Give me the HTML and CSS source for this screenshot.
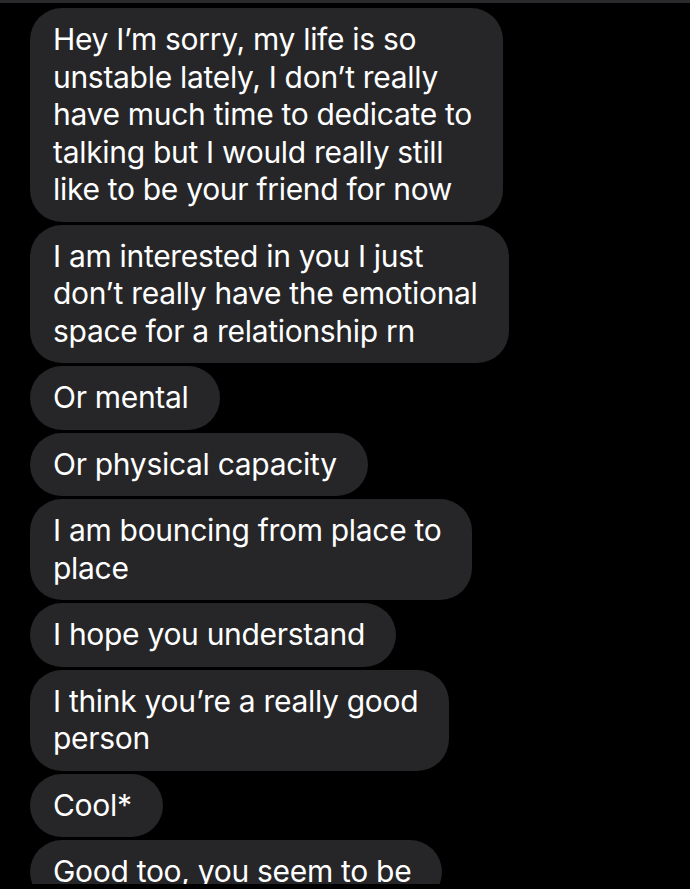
FILE: index.html
```html
<!DOCTYPE html>
<html lang="en">
<head>
    <meta charset="UTF-8">
    <meta name="viewport" content="width=device-width, initial-scale=1.0">
    <title>Messages</title>
    <link rel="stylesheet" href="styles.css">
</head>
<body>
    <div class="topbar"></div>
    <div class="thread">
        <div class="bubble">Hey I’m sorry, my life is so<br>unstable lately, I don’t really<br>have much time to dedicate to<br>talking but I would really still<br>like to be your friend for now</div>
        <div class="bubble">I am interested in you I just<br>don’t really have the emotional<br>space for a relationship rn</div>
        <div class="bubble">Or mental</div>
        <div class="bubble">Or physical capacity</div>
        <div class="bubble">I am bouncing from place to<br>place</div>
        <div class="bubble">I hope you understand</div>
        <div class="bubble">I think you’re a really good<br>person</div>
        <div class="bubble">Cool*</div>
        <div class="bubble">Good too, you seem to be</div>
    </div>
</body>
</html>
```

FILE: styles.css
```css
body {
    margin: 0;
    background-color: #000;
    color: #fff;
    font-family: Inter, "Noto Sans", sans-serif;
}
.topbar {
    height: 3px;
    background-color: #2a2a2c;
}
.thread {
    height: 881px;
    overflow: hidden;
    padding: 5px 0 0 30px;
    box-sizing: border-box;
    display: flex;
    flex-direction: column;
    align-items: flex-start;
    gap: 3px;
}
.bubble {
    flex-shrink: 0;
    background-color: #262628;
    border-radius: 32px;
    padding: 13px 31px 13px 23px;
    font-size: 30px;
    line-height: 37.5px;
    letter-spacing: -0.3px;
    white-space: nowrap;
}
```
